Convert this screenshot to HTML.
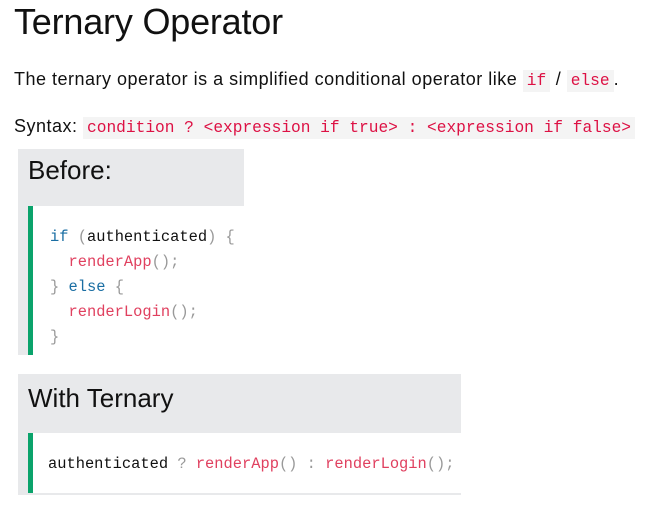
<!DOCTYPE html>
<html><head><meta charset="utf-8"><style>
body{margin:0;background:#fff;font-family:"Liberation Sans",sans-serif;color:#111;width:646px;height:508px;overflow:hidden;position:relative}
h1{position:absolute;left:14px;top:1px;margin:0;font-weight:normal;font-size:36px;letter-spacing:-0.2px}
p{position:absolute;left:14px;margin:0;font-size:18px;letter-spacing:0.5px;white-space:nowrap}
code{font-family:"Liberation Mono",monospace;color:#dd1144;background:#f4f4f4;padding:2px 4px;font-size:16.2px;letter-spacing:0}
.panel{position:absolute;left:18px;background:#e8e9eb}
.panel h2{position:absolute;left:10px;margin:0;font-weight:normal;font-size:26px;color:#111}
.cb{position:absolute;left:10px;background:#fff;border-left:5px solid #0aa36b;font-family:"Liberation Mono",monospace;font-size:15.4px;line-height:25px;white-space:pre;color:#111}
.k{color:#1a6ea3}.f{color:#e0405f}.p{color:#999}
</style></head><body>
<h1>Ternary Operator</h1>
<p style="top:69px">The ternary operator is a simplified conditional operator like <code>if</code> / <code>else</code>.</p>
<p style="top:116px">Syntax: <code>condition ? &lt;expression if true&gt; : &lt;expression if false&gt;</code></p>
<div class="panel" style="top:149px;width:226px;height:206px">
<h2 style="top:6px">Before:</h2>
<div class="cb" style="top:57px;width:211px;height:149px;padding:0"><div style="position:absolute;left:17px;top:19px"><span class="k">if</span> <span class="p">(</span>authenticated<span class="p">) {</span>
  <span class="f">renderApp</span><span class="p">();</span>
<span class="p">}</span> <span class="k">else</span> <span class="p">{</span>
  <span class="f">renderLogin</span><span class="p">();</span>
<span class="p">}</span></div></div>
</div>
<div class="panel" style="top:374px;width:443px;height:121px">
<h2 style="top:9px">With Ternary</h2>
<div class="cb" style="top:59px;width:428px;height:60px"><div style="position:absolute;left:15px;top:19px">authenticated <span class="p">?</span> <span class="f">renderApp</span><span class="p">()</span> <span class="p">:</span> <span class="f">renderLogin</span><span class="p">();</span></div></div>
</div>
</body></html>
